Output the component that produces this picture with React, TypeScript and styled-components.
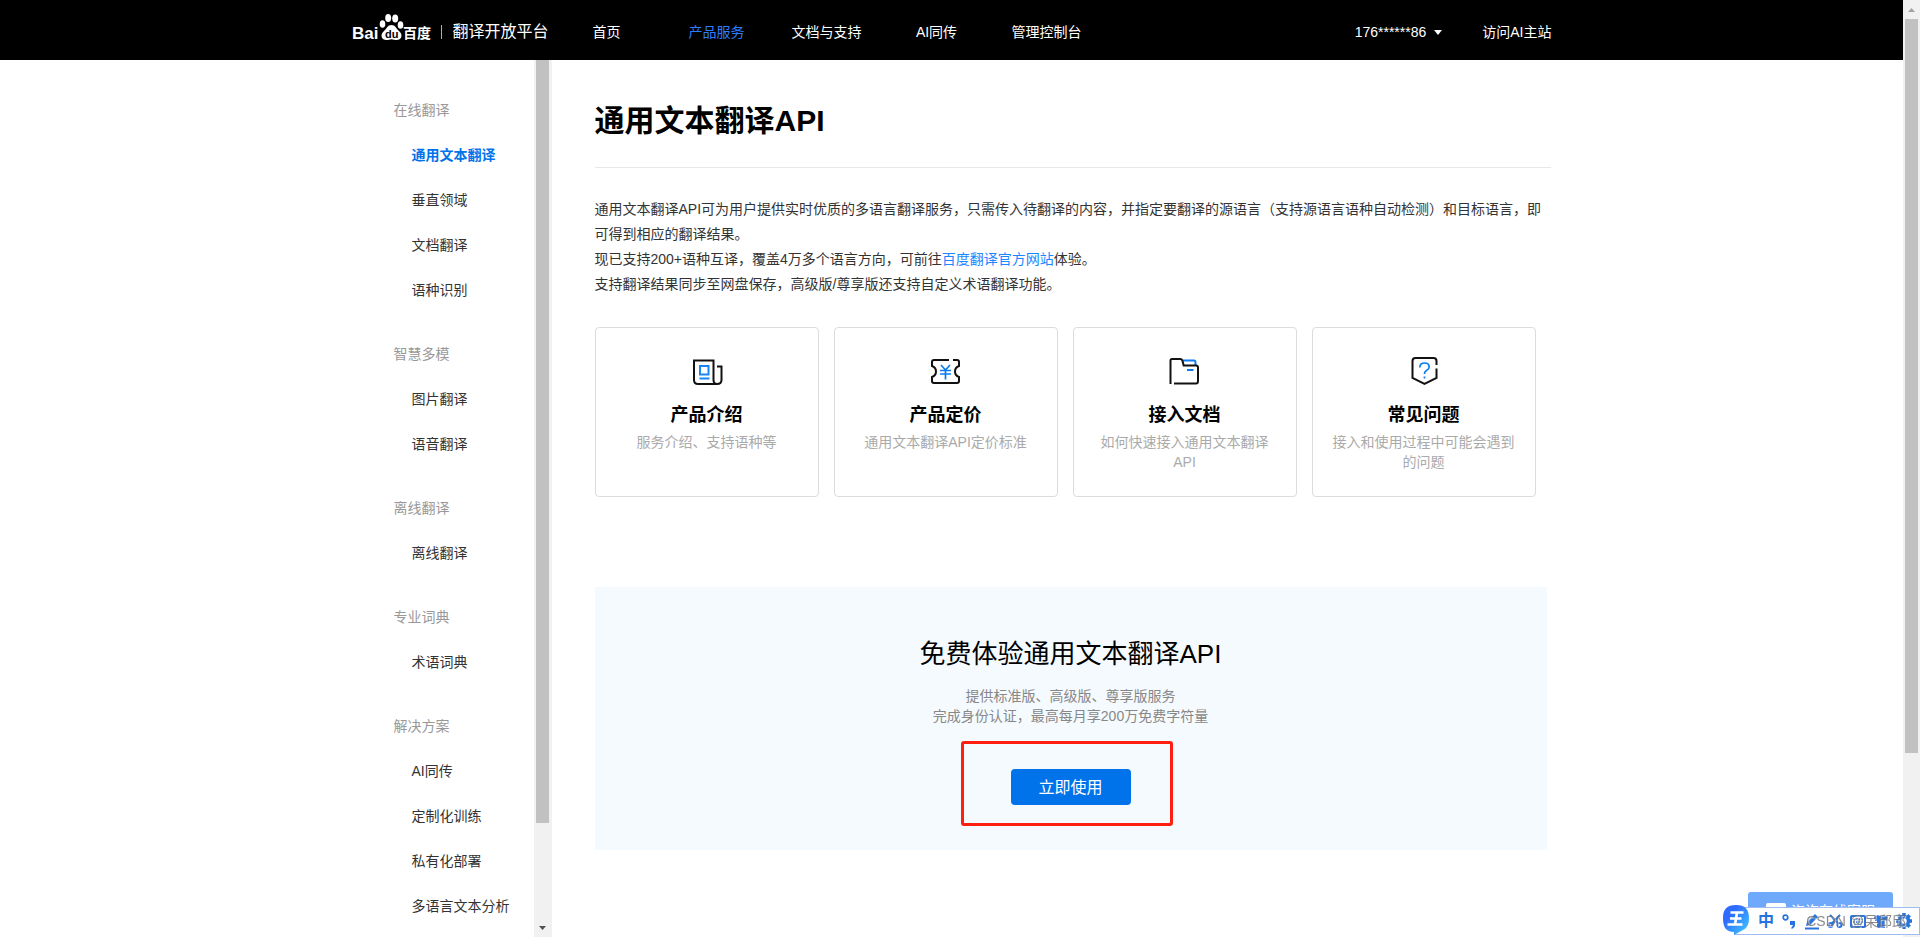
import React from "react";
import styled, { createGlobalStyle, css } from "styled-components";

const Global = createGlobalStyle`
  *, *::before, *::after { box-sizing: border-box; }
  html, body { margin: 0; height: 100%; background: #fff; }
  body {
    font-family: "Liberation Sans", "Noto Sans CJK SC", sans-serif;
    font-size: 14px;
    color: #333;
    overflow: hidden;
  }
  #root { height: 100%; }
  a { color: inherit; text-decoration: none; }
  h1, h2, h3, p, ul { margin: 0; padding: 0; }
  ul { list-style: none; }
`;

const Shell = styled.div`
  display: flex;
  height: 100vh;
`;

const Page = styled.div`
  flex: 1;
  min-width: 0;
  display: flex;
  flex-direction: column;
  overflow: hidden;
`;

const Header = styled.header`
  flex: none;
  height: 60px;
  background: #000;
  color: #fff;
`;

const HeaderInner = styled.div`
  display: flex;
  align-items: center;
  width: 100%;
  max-width: 1200px;
  height: 100%;
  margin: 0 auto;
  padding-top: 4px;
`;

const Brand = styled.a`
  display: flex;
  flex: none;
  align-items: center;
  width: 200px;
`;

const BrandMark = styled.svg`
  display: block;
  flex: none;
  margin-top: -12px;
  overflow: visible;
`;

const BrandName = styled.span`
  font-size: 16px;
  line-height: 20px;
  white-space: nowrap;
`;

const BrandDivider = styled.span`
  flex: none;
  width: 1px;
  height: 14px;
  margin: 0 11px 0 9px;
  background: #aaa;
`;

const Nav = styled.nav`
  display: flex;
  flex: 1;
`;

const NavLink = styled.a<{ $active?: boolean }>`
  width: 110px;
  line-height: 20px;
  text-align: center;
  color: ${(p) => (p.$active ? "#2e7dff" : "#fff")};
`;

const Account = styled.div`
  display: flex;
  align-items: center;
  gap: 40px;
  line-height: 20px;
`;

const UserButton = styled.button`
  display: flex;
  align-items: center;
  gap: 8px;
  padding: 0;
  border: 0;
  background: none;
  color: inherit;
  font: inherit;
`;

const Body = styled.div`
  display: flex;
  flex: 1;
  min-height: 0;
  width: 100%;
  max-width: 1200px;
  margin: 0 auto;
`;

const Sidebar = styled.aside`
  display: flex;
  flex: none;
  width: 200px;
`;

const Menu = styled.nav`
  display: flex;
  flex-direction: column;
  gap: 19px;
  flex: 1;
  padding: 28px 0 0 42px;
  overflow: hidden;
`;

const MenuGroup = styled.section`
  line-height: 45px;
  white-space: nowrap;
`;

const MenuTitle = styled.h3`
  font-size: 14px;
  font-weight: 400;
  color: #999;
`;

const MenuLink = styled.a<{ $active?: boolean }>`
  display: block;
  padding-left: 18px;
  ${(p) =>
    p.$active &&
    css`
      color: #0073eb;
      font-weight: 700;
    `}
`;

const Track = styled.div<{ $wide?: boolean }>`
  display: flex;
  flex-direction: column;
  flex: none;
  width: ${(p) => (p.$wide ? "18px" : "17px")};
  background: #f1f1f1;
`;

const Thumb = styled.div<{ $share: string }>`
  flex: none;
  width: 13px;
  height: ${(p) => p.$share};
  margin: 0 2px;
  background: #c1c1c1;
`;

const ArrowSlot = styled.div<{ $end?: boolean }>`
  display: flex;
  align-items: center;
  justify-content: center;
  flex: none;
  width: 17px;
  height: 19px;
  margin-top: ${(p) => (p.$end ? "auto" : "0")};
`;

const Main = styled.main`
  flex: 1;
  min-width: 0;
  padding: 38px 1px 0 43px;
`;

const Title = styled.h1`
  padding-bottom: 23px;
  border-bottom: 1px solid #e8e8e8;
  font-size: 30px;
  line-height: 46px;
  color: #000;
`;

const Intro = styled.div`
  padding-top: 29px;
  line-height: 25px;
`;

const TextLink = styled.a`
  && { color: #1a86ff; }
`;

const Cards = styled.div`
  display: grid;
  grid-template-columns: repeat(4, 1fr);
  gap: 15px;
  margin: 30px 15px 0 0;
`;

const Card = styled.a`
  display: flex;
  flex-direction: column;
  align-items: center;
  height: 170px;
  padding: 24px 18px 0;
  border: 1px solid #dcdcdc;
  border-radius: 4px;
  text-align: center;
`;

const CardTitle = styled.h3`
  margin-top: 9px;
  font-size: 18px;
  line-height: 28px;
  color: #000;
`;

const CardText = styled.p`
  margin-top: 3px;
  line-height: 20px;
  color: #aaa;
`;

const Trial = styled.section`
  display: flex;
  flex-direction: column;
  align-items: center;
  height: 263px;
  margin: 90px 4px 0 0;
  padding-top: 48px;
  background: #f5faff;
  text-align: center;
`;

const TrialTitle = styled.h2`
  font-size: 26px;
  font-weight: 400;
  line-height: 38px;
  color: #000;
`;

const TrialText = styled.p`
  margin-top: 13px;
  line-height: 20px;
  color: #888;
`;

const TrialAction = styled.div`
  position: relative;
  margin-top: 43px;
`;

const PrimaryButton = styled.button`
  display: block;
  width: 120px;
  height: 36px;
  padding: 0 0 2px;
  border: 0;
  border-radius: 4px;
  background: #0073eb;
  color: #fff;
  font: inherit;
  font-size: 16px;
`;

const Highlight = styled.span`
  position: absolute;
  top: -28px;
  left: -50px;
  width: 212px;
  height: 85px;
  border: 3px solid #ff1f10;
  border-radius: 3px;
  pointer-events: none;
`;

const ChatButton = styled.button`
  position: fixed;
  right: 27px;
  bottom: 5px;
  display: flex;
  align-items: flex-start;
  gap: 5px;
  width: 145px;
  height: 40px;
  padding: 9px 0 0 18px;
  border: 0;
  border-radius: 3px 3px 0 0;
  background: #6fa9fb;
  color: #fff;
  font: inherit;
  line-height: 20px;
`;

const ImeBar = styled.div`
  position: fixed;
  right: 0;
  bottom: 2px;
  display: flex;
  align-items: center;
  gap: 7px;
  width: 186px;
  height: 28px;
  padding-left: 23px;
  border: 1px solid #9fbdf0;
  background: #fff;
  color: #2672de;
`;

const ImeMode = styled.span`
  width: 16px;
  font-size: 16px;
  font-weight: 700;
  line-height: 24px;
`;

const ImeBadge = styled.svg`
  position: absolute;
  left: -13px;
  top: -4px;
`;

const Watermark = styled.span`
  position: fixed;
  right: 14px;
  bottom: 6px;
  line-height: 20px;
  color: rgba(110, 110, 110, 0.8);
  text-shadow: 1px 1px 1px rgba(255, 255, 255, 0.7);
  white-space: nowrap;
  pointer-events: none;
`;

const Arrow = ({ up, color, size = 7 }: { up?: boolean; color: string; size?: number }) => (
  <svg width={size} height={size - 3} viewBox="0 0 8 4" preserveAspectRatio="none" aria-hidden="true">
    <path d={up ? "M0 4 4 0 8 4z" : "M0 0h8L4 4z"} fill={color} />
  </svg>
);

const menu = [
  { title: "在线翻译", items: ["通用文本翻译", "垂直领域", "文档翻译", "语种识别"] },
  { title: "智慧多模", items: ["图片翻译", "语音翻译"] },
  { title: "离线翻译", items: ["离线翻译"] },
  { title: "专业词典", items: ["术语词典"] },
  { title: "解决方案", items: ["AI同传", "定制化训练", "私有化部署", "多语言文本分析"] },
];

const iconProps = {
  width: 32,
  height: 40,
  viewBox: "0 0 32 40",
  fill: "none",
  strokeWidth: 2,
  stroke: "#111",
  "aria-hidden": true,
} as const;

const NewsIcon = () => (
  <svg {...iconProps}>
    <path d="M26 32H7q-4 0-4-4V8.500h19.500V28q0 4 3.500 4 4.500 0 4.500-4V14.500H26" />
    <path d="M9 14h8.500v8.500H9zM8.500 26.500h10" stroke="#1a86f5" />
  </svg>
);

const TicketIcon = () => (
  <svg {...iconProps}>
    <path d="M19 8H4Q2 8 2 10v4q4 1.500 4 5.500T2 25v4q0 2 2 2h23q2 0 2-2v-4q-4-1.500-4-5.500t4-5.500v-4q0-2-2-2h-4" />
    <path d="m11 13 4.500 5 4.500-5M10 18.500h11M10 22h11M15.500 18v9.500" stroke="#0a7df0" strokeWidth="1.700" />
  </svg>
);

const FolderIcon = () => (
  <svg {...iconProps}>
    <path d="M13 8.500h12q1.500 0 1.500 2V13M18 18h6.500" stroke="#0a7df0" />
    <path d="M1.500 32V8.500Q1.500 7 3 7h8.500q1.500 0 2 2l1.200 4.500H27q2 0 2 2V29q0 2.500-2 2.500H5" />
  </svg>
);

const HelpIcon = () => (
  <svg {...iconProps}>
    <path d="M28.500 13V9q0-3-3-3h-18q-3 0-3 3v17l12 6 12-6v-9.500" />
    <path d="M11.800 15.500q0-4.500 4.700-4.500t4.700 4q0 2-2.700 3.500-2 1.200-2 3V22M16.500 24.500v2" stroke="#0a7df0" strokeWidth="1.700" />
  </svg>
);

const cards = [
  { title: "产品介绍", text: "服务介绍、支持语种等", Icon: NewsIcon },
  { title: "产品定价", text: "通用文本翻译API定价标准", Icon: TicketIcon },
  { title: "接入文档", text: "如何快速接入通用文本翻译API", Icon: FolderIcon },
  { title: "常见问题", text: "接入和使用过程中可能会遇到的问题", Icon: HelpIcon },
];

const navItems = ["首页", "产品服务", "文档与支持", "AI同传", "管理控制台"];

const Logo = () => (
  <BrandMark width="80" height="28" viewBox="0 0 80 28" role="img" aria-label="Baidu 百度">
    <g fill="#fff">
      <text x="0" y="27" fontSize="17" fontWeight="700" fontFamily="Liberation Sans, sans-serif">Bai</text>
      <ellipse cx="30.500" cy="12" rx="2.800" ry="3.800" />
      <ellipse cx="36.200" cy="6" rx="3" ry="4" />
      <ellipse cx="43.200" cy="6.500" rx="3" ry="4" />
      <ellipse cx="48.500" cy="13" rx="2.800" ry="3.800" />
      <path d="M39.500 13c4 0 4.500 3.500 7.500 6 4.500 4 2.500 9-2.500 9-2 0-3-.8-5-.8s-3 .8-5 .8c-5 0-7-5-2.500-9 3-2.500 3.500-6 7.500-6z" />
      <text x="51" y="26" fontSize="14" fontWeight="700" fontFamily="Noto Sans CJK SC, sans-serif">百度</text>
    </g>
    <text x="33" y="26" fontSize="11" fontWeight="700" fontFamily="Liberation Sans, sans-serif" fill="#000">du</text>
  </BrandMark>
);

const toolIconProps = {
  width: 16,
  height: 18,
  viewBox: "0 0 16 18",
  fill: "none",
  stroke: "currentColor",
  strokeWidth: 2,
  "aria-hidden": true,
} as const;

const gearTeeth = [0, 45, 90, 135];

const ImeIcons = () => (
  <>
    <svg {...toolIconProps}>
      <circle cx="4.500" cy="5.500" r="2.300" strokeWidth="1.700" />
      <path d="M9 9h5v4q0 2.500-3.500 4v-2q1.500-.8 1.500-2H9z" fill="currentColor" stroke="none" />
    </svg>
    <svg {...toolIconProps}>
      <path d="M1 16.500h14" />
      <path d="m2 14 1-4 8-8 3 3-8 8z" fill="currentColor" stroke="none" />
    </svg>
    <svg {...toolIconProps}>
      <path d="M3 3l8.500 9M13 3l-8.500 9" />
      <circle cx="3.500" cy="13" r="2" />
      <circle cx="12.500" cy="13" r="2" />
    </svg>
    <svg {...toolIconProps}>
      <rect x="1" y="4" width="14" height="11" rx="1" />
      <path d="M3 7.500h10M3 10h10M4.500 12.500h7" strokeDasharray="1.800 1" strokeWidth="1.500" />
    </svg>
    <svg {...toolIconProps}>
      <path d="M5 3q3 2.500 6 0l4 2-1 4-2-.5V16H4V8.500L2 9 1 5z" fill="currentColor" stroke="none" />
    </svg>
    <svg {...toolIconProps}>
      <circle cx="8" cy="9" r="4.500" strokeWidth="3.500" />
      {gearTeeth.map((a) => (
        <path key={a} d="M8 1v3M8 14v3" strokeWidth="3.500" transform={`rotate(${a} 8 9)`} />
      ))}
    </svg>
  </>
);

const App = () => (
  <>
    <Global />
    <Shell>
      <Page>
        <Header>
          <HeaderInner>
            <Brand href="#">
              <Logo />
              <BrandDivider />
              <BrandName>翻译开放平台</BrandName>
            </Brand>
            <Nav>
              {navItems.map((t, i) => (
                <NavLink key={t} href="#" $active={i === 1}>{t}</NavLink>
              ))}
            </Nav>
            <Account>
              <UserButton type="button">
                176******86 <Arrow color="#fff" size={8} />
              </UserButton>
              <a href="#">访问AI主站</a>
            </Account>
          </HeaderInner>
        </Header>
        <Body>
          <Sidebar>
            <Menu>
              {menu.map((g, gi) => (
                <MenuGroup key={g.title}>
                  <MenuTitle>{g.title}</MenuTitle>
                  <ul>
                    {g.items.map((t, i) => (
                      <li key={t}>
                        <MenuLink href="#" $active={gi === 0 && i === 0}>{t}</MenuLink>
                      </li>
                    ))}
                  </ul>
                </MenuGroup>
              ))}
            </Menu>
            <Track $wide>
              <Thumb $share="87%" />
              <ArrowSlot $end>
                <Arrow color="#505050" />
              </ArrowSlot>
            </Track>
          </Sidebar>
          <Main>
            <Title>通用文本翻译API</Title>
            <Intro>
              <p>通用文本翻译API可为用户提供实时优质的多语言翻译服务，只需传入待翻译的内容，并指定要翻译的源语言（支持源语言语种自动检测）和目标语言，即可得到相应的翻译结果。</p>
              <p>现已支持200+语种互译，覆盖4万多个语言方向，可前往<TextLink href="#">百度翻译官方网站</TextLink>体验。</p>
              <p>支持翻译结果同步至网盘保存，高级版/尊享版还支持自定义术语翻译功能。</p>
            </Intro>
            <Cards>
              {cards.map(({ title, text, Icon }) => (
                <Card key={title} href="#">
                  <Icon />
                  <CardTitle>{title}</CardTitle>
                  <CardText>{text}</CardText>
                </Card>
              ))}
            </Cards>
            <Trial>
              <TrialTitle>免费体验通用文本翻译API</TrialTitle>
              <TrialText>
                提供标准版、高级版、尊享版服务
                <br />
                完成身份认证，最高每月享200万免费字符量
              </TrialText>
              <TrialAction>
                <PrimaryButton type="button">立即使用</PrimaryButton>
                <Highlight />
              </TrialAction>
            </Trial>
          </Main>
        </Body>
      </Page>
      <Track>
        <ArrowSlot>
          <Arrow up color="#a3a3a3" />
        </ArrowSlot>
        <Thumb $share="78.300%" />
      </Track>
    </Shell>
    <ChatButton type="button">
      <svg width="20" height="18" viewBox="0 0 20 18" aria-hidden="true">
        <path d="M2 2h16q2 0 2 2v9q0 2-2 2h-6l-2 3-2-3H2q-2 0-2-2V4q0-2 2-2z" fill="#fff" />
        <path d="M5 7h10M5 11h7" stroke="#6fa9fb" strokeWidth="2" />
      </svg>
      咨询在线客服
    </ChatButton>
    <ImeBar>
      <ImeBadge width="28" height="32" viewBox="0 0 28 32" role="img" aria-label="王">
        <defs>
          <linearGradient id="badge" x1="0" y1="0" x2="1" y2="1">
            <stop offset="0.300" stopColor="#2f6bff" />
            <stop offset="1" stopColor="#3fd0ff" />
          </linearGradient>
        </defs>
        <path d="M14 1c9 0 13 4 13 13 0 6-2 10-6 12l-9 5v-3C4 28 1 23 1 14 1 5 5 1 14 1z" fill="url(#badge)" />
        <path d="M8.500 8.500h13M8 14.500h11.500M5.500 20.500h15M15 8.500l-2 12" stroke="#fff" strokeWidth="2.600" fill="none" />
      </ImeBadge>
      <ImeMode>中</ImeMode>
      <ImeIcons />
    </ImeBar>
    <Watermark>CSDN @呆邱邱</Watermark>
  </>
);

export default App;
